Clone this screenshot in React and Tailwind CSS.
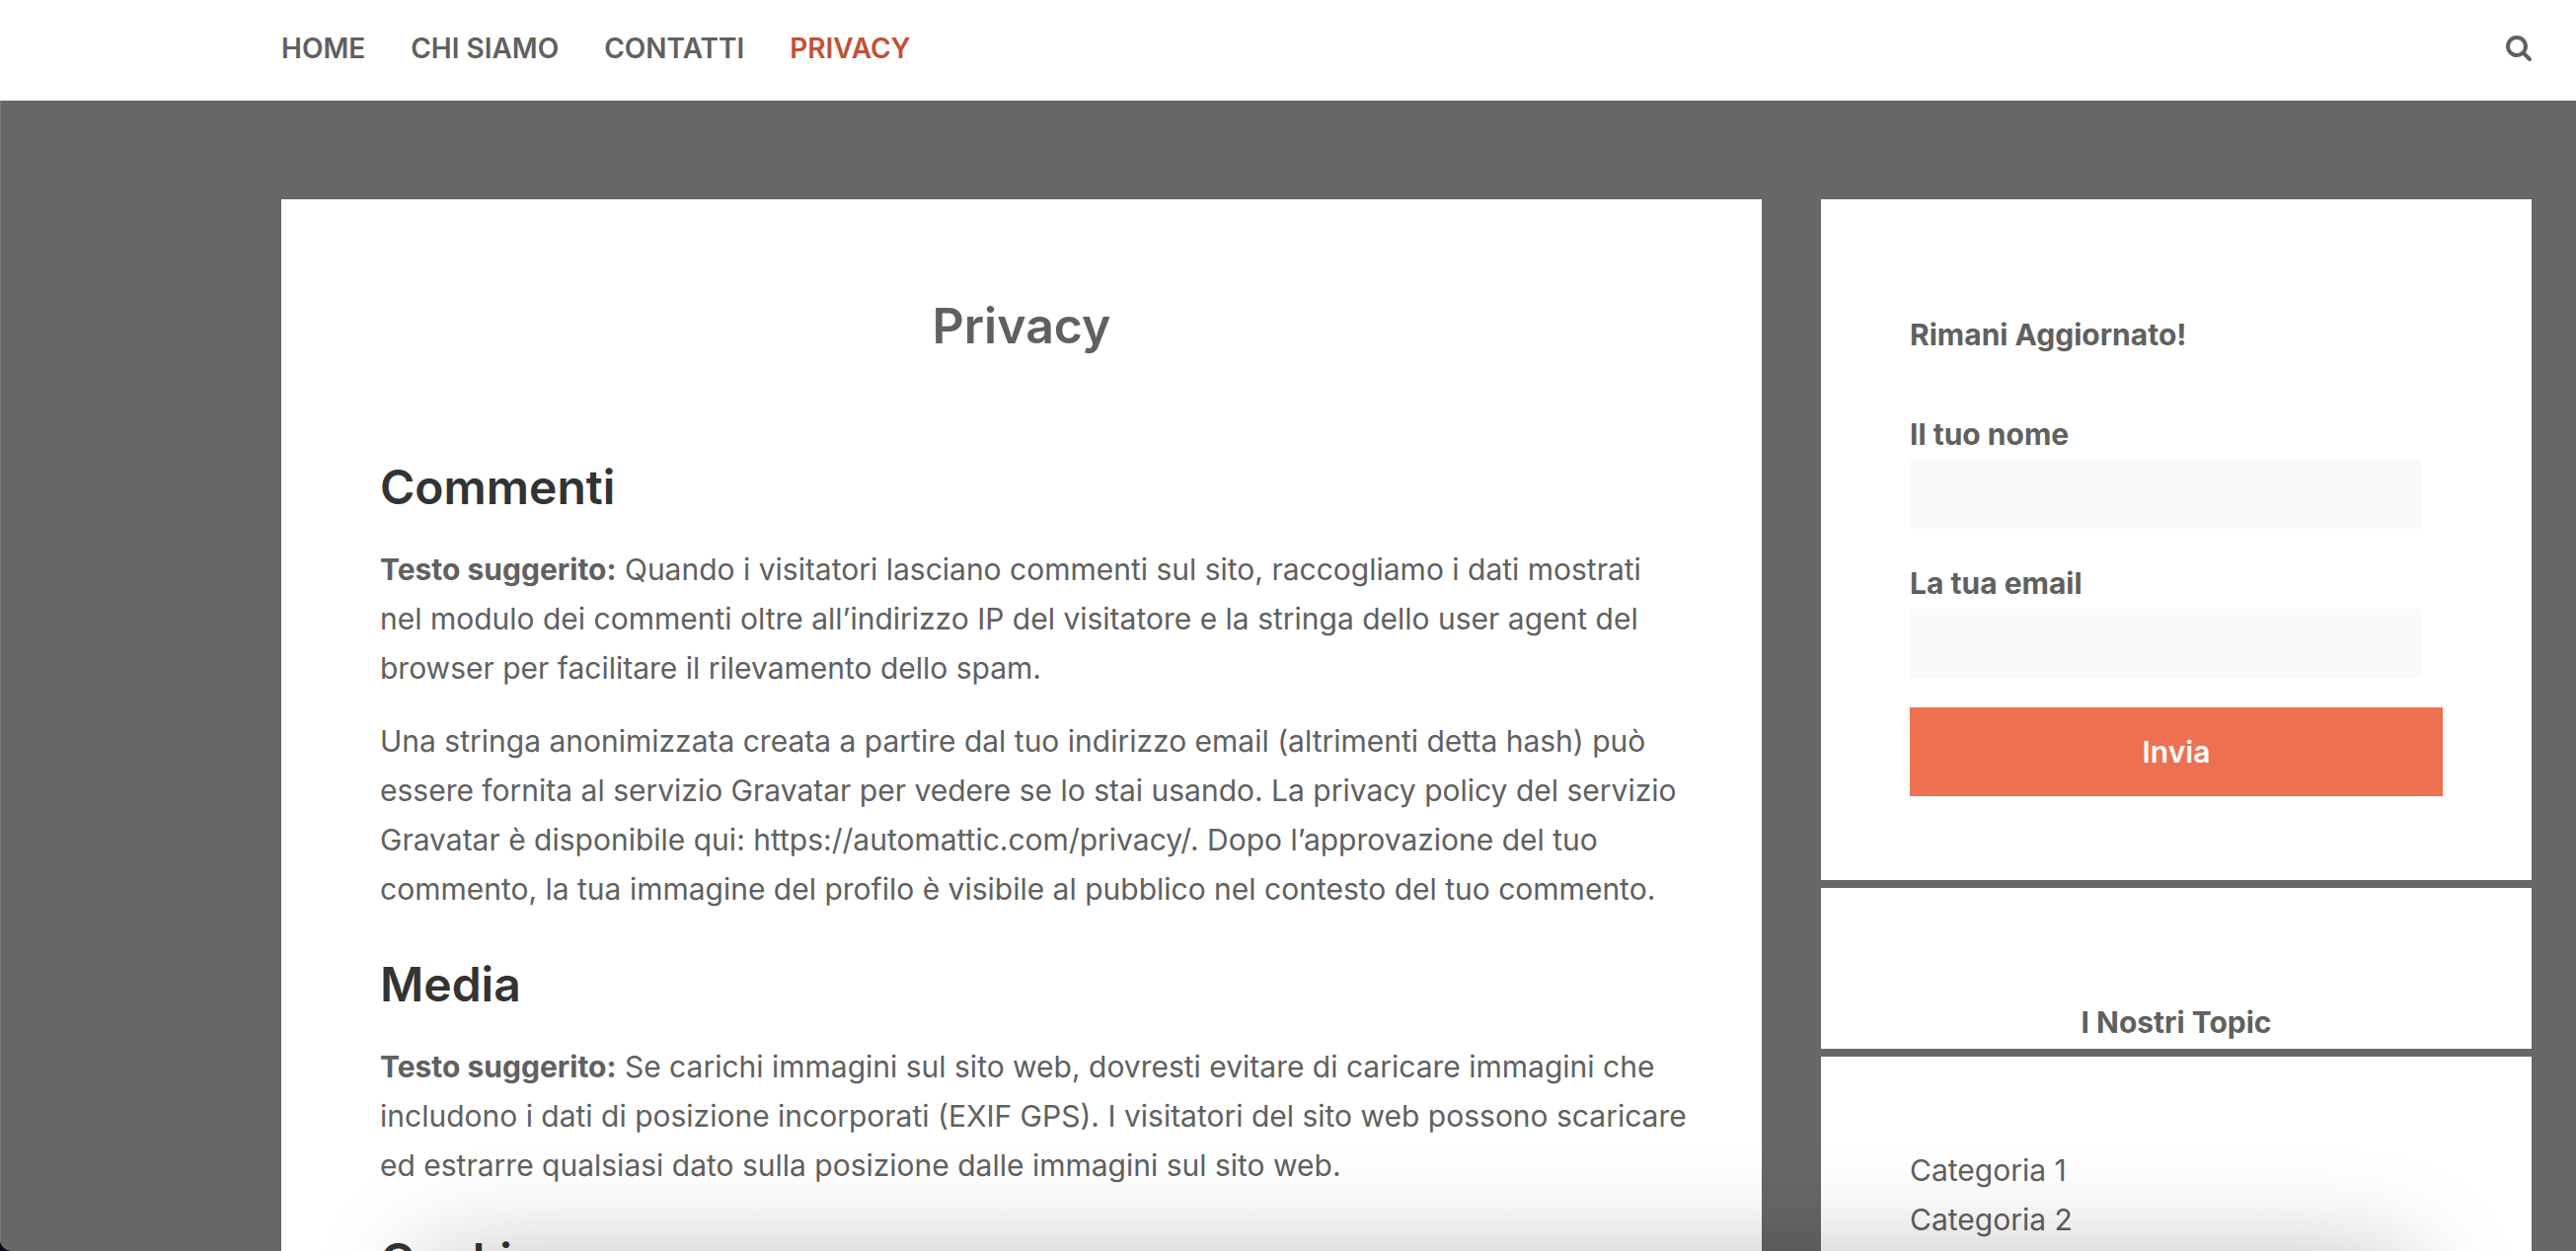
const navItems = [
  { label: "HOME", href: "#home" },
  { label: "CHI SIAMO", href: "#chi-siamo" },
  { label: "CONTATTI", href: "#contatti" },
  { label: "PRIVACY", href: "#privacy", active: true },
];

function SearchIcon() {
  return (
    <svg viewBox="0 0 1664 1664" className="size-[26px]" fill="currentColor" aria-hidden="true">
      <path d="M1152 704q0-185-131.500-316.500T704 256 387.500 387.500 256 704t131.500 316.500T704 1152t316.500-131.500T1152 704zm512 832q0 52-38 90t-90 38q-54 0-90-38l-343-342q-179 124-399 124-143 0-273.500-55.500t-225-150-150-225T0 704t55.500-273.500 150-225 225-150T704 0t273.500 55.500 225 150 150 225T1408 704q0 220-124 399l343 343q37 37 37 90z" />
    </svg>
  );
}

function Header() {
  return (
    <header className="flex h-[102px] items-center justify-between bg-white pr-[45px] pb-1 pl-[285px]">
      <nav className="flex gap-[46px] text-[28px] leading-[50px] font-semibold">
        {navItems.map((item) => (
          <a key={item.label} href={item.href} className={item.active ? "text-[#c15033]" : ""}>
            {item.label}
          </a>
        ))}
      </nav>
      <button type="button" aria-label="Cerca">
        <SearchIcon />
      </button>
    </header>
  );
}

function SectionTitle({ children }) {
  return <h2 className="mb-7 text-5xl leading-[60px] font-semibold text-[#333333]">{children}</h2>;
}

function Article() {
  return (
    <main className="min-w-0 bg-white px-[60px] pt-[88px]">
      <h1 className="mb-[94px] text-center text-[50px] leading-[80px] font-semibold">Privacy</h1>
      <div className="pl-10">
        <SectionTitle>Commenti</SectionTitle>
        <p className="mb-6">
          <strong>Testo suggerito:</strong> Quando i visitatori lasciano commenti sul sito, raccogliamo i dati mostrati
          <br />
          nel modulo dei commenti oltre all’indirizzo IP del visitatore e la stringa dello user agent del
          <br />
          browser per facilitare il rilevamento dello spam.
        </p>
        <p className="mb-[42px]">
          Una stringa anonimizzata creata a partire dal tuo indirizzo email (altrimenti detta hash) può
          <br />
          essere fornita al servizio Gravatar per vedere se lo stai usando. La privacy policy del servizio
          <br />
          Gravatar è disponibile qui: https://automattic.com/privacy/. Dopo l’approvazione del tuo
          <br />
          commento, la tua immagine del profilo è visibile al pubblico nel contesto del tuo commento.
        </p>
        <SectionTitle>Media</SectionTitle>
        <p className="mb-[42px]">
          <strong>Testo suggerito:</strong> Se carichi immagini sul sito web, dovresti evitare di caricare immagini che
          <br />
          includono i dati di posizione incorporati (EXIF GPS). I visitatori del sito web possono scaricare
          <br />
          ed estrarre qualsiasi dato sulla posizione dalle immagini sul sito web.
        </p>
        <SectionTitle>Cookie</SectionTitle>
      </div>
    </main>
  );
}

function Field({ id, label, type }) {
  return (
    <div className="mb-[30px]">
      <label htmlFor={id} className="block leading-[51px] font-bold">
        {label}
      </label>
      <input id={id} type={type} className="block h-[70px] w-[96%] bg-[#fafafa] px-4 outline-none" />
    </div>
  );
}

function Sidebar() {
  return (
    <aside className="flex min-w-0 flex-col gap-2">
      <section className="bg-white px-[90px] pt-[112px] pb-[85px]">
        <h3 className="mb-[50px] leading-[51px] font-bold">Rimani Aggiornato!</h3>
        <form>
          <Field id="nome" label="Il tuo nome" type="text" />
          <Field id="email" label="La tua email" type="email" />
          <button type="button" className="h-[90px] w-full bg-[#ed7150] font-semibold text-white">
            Invia
          </button>
        </form>
      </section>
      <section className="bg-white px-[90px] pt-[111px] pb-px text-center">
        <h3 className="leading-[51px] font-bold">I Nostri Topic</h3>
      </section>
      <section className="grow bg-white px-[90px] pt-[90px]">
        <ul>
          <li><a href="#categoria-1">Categoria 1</a></li>
          <li><a href="#categoria-2">Categoria 2</a></li>
        </ul>
      </section>
    </aside>
  );
}

export default function App() {
  return (
    <div className="h-screen bg-[#080818]">
      <div className="relative flex h-full flex-col overflow-hidden rounded-bl-[12px] bg-[#676767] font-['Inter',sans-serif] text-[30px] leading-[50px] text-[#606060]">
        <Header />
        <div className="grid min-h-0 flex-1 grid-cols-[1500fr_720fr] gap-[60px] border-l border-[#777777] pt-[100px] pr-[45px] pl-[284px]">
          <Article />
          <Sidebar />
        </div>
        <div className="pointer-events-none absolute top-full right-[170px] left-[430px] h-40 shadow-[0_10px_110px_0_rgba(0,0,0,0.28)]" />
      </div>
    </div>
  );
}
